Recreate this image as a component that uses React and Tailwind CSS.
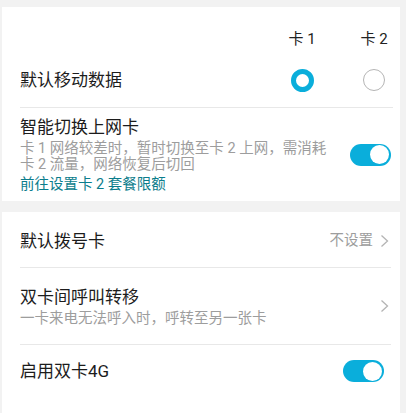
import React from "react";

const font = { fontFamily: '"Roboto", "Noto Sans CJK SC", sans-serif' };

function Toggle() {
  return (
    <div className="relative h-[22px] w-[41px] shrink-0 rounded-full bg-[#0aaedb]">
      <div className="absolute right-[2px] top-[1.5px] h-[19px] w-[19px] rounded-full bg-white" />
    </div>
  );
}

function Chevron() {
  return (
    <svg width="9" height="14" viewBox="0 0 9 14" className="shrink-0">
      <path d="M1.5 1.5 L7.5 7 L1.5 12.5" fill="none" stroke="#b4b4b4" strokeWidth="1.3" />
    </svg>
  );
}

export default function App() {
  return (
    <div
      className="h-[413px] w-[406px] overflow-hidden bg-[#f2f2f2] pt-[7px] font-['Roboto','Noto_Sans_CJK_SC',sans-serif]"
      style={font}
    >
      {/* Card 1 */}
      <div className="ml-[2px] mr-[6px] bg-white pl-[18px] pr-[7px]">
        <div className="flex h-[46px] items-end justify-end gap-[36px] pb-[4px] pr-[1px]">
          <div className="flex w-[36px] justify-center text-[15px] leading-[20px] text-[#222]">卡 1</div>
          <div className="flex w-[36px] justify-center text-[15px] leading-[20px] text-[#222]">卡 2</div>
        </div>
        <div className="flex h-[54px] items-center">
          <div className="flex-1 text-[17px] leading-[24px] text-[#1c1c1c]">默认移动数据</div>
          <div className="flex items-center gap-[36px] pr-[1px]">
            <div className="flex w-[36px] justify-center">
              <div className="h-[23px] w-[23px] rounded-full border-[5.5px] border-[#0aaedb] bg-white" />
            </div>
            <div className="flex w-[36px] justify-center">
              <div className="h-[22px] w-[22px] rounded-full border border-[#b5b5b5] bg-white" />
            </div>
          </div>
        </div>
        <div className="h-px bg-[#e8e8e8]" />
        <div className="flex items-center pb-[7px] pt-[7px]">
          <div className="w-[315px]">
            <div className="text-[17px] leading-[24px] text-[#1c1c1c]">智能切换上网卡</div>
            <div className="mt-[2px] text-[14.5px] leading-[16px] text-[#9d9d9d]">
              卡 1 网络较差时，暂时切换至卡 2 上网，需消耗卡 2 流量，网络恢复后切回
            </div>
            <div className="mt-[3px] text-[14.5px] leading-[18px] text-[#0b7d8c]">前往设置卡 2 套餐限额</div>
          </div>
          <div className="flex flex-1 justify-end pr-[2px]">
            <Toggle />
          </div>
        </div>
      </div>

      {/* Card 2 */}
      <div className="ml-[2px] mr-[6px] mt-[11px] h-[250px] bg-white pl-[18px] pr-[9px]">
        <div className="flex h-[55px] items-center pt-[2px]">
          <div className="flex-1 text-[17px] leading-[24px] text-[#1c1c1c]">默认拨号卡</div>
          <div className="text-[14.5px] leading-[20px] text-[#9d9d9d]">不设置</div>
          <div className="ml-[7px] mr-[2px] flex items-center">
            <Chevron />
          </div>
        </div>
        <div className="h-px bg-[#e8e8e8]" />
        <div className="flex h-[76px] items-center">
          <div className="flex-1">
            <div className="text-[17px] leading-[24px] text-[#1c1c1c]">双卡间呼叫转移</div>
            <div className="text-[14.5px] leading-[19px] text-[#9d9d9d]">一卡来电无法呼入时，呼转至另一张卡</div>
          </div>
          <div className="mr-[2px] flex items-center">
            <Chevron />
          </div>
        </div>
        <div className="h-px bg-[#e8e8e8]" />
        <div className="flex h-[52px] items-center">
          <div className="flex-1 text-[17px] leading-[24px] text-[#1c1c1c]">启用双卡4G</div>
          <div className="mr-[7px]">
            <Toggle />
          </div>
        </div>
      </div>
    </div>
  );
}
